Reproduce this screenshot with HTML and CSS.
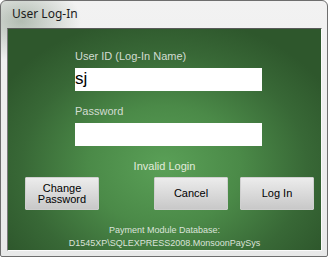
FILE: index.html
```html
<!DOCTYPE html>
<html lang="en">
<head>
    <meta charset="UTF-8">
    <title>User Log-In</title>
    <link rel="stylesheet" href="styles.css">
</head>
<body>
    <div class="window">
        <div class="title-bar">User Log-In</div>

        <div class="panel">
            <div class="form">
                <label class="field-label">User ID (Log-In Name)</label>
                <div class="text-box">sj</div>

                <label class="field-label second">Password</label>
                <div class="text-box"></div>
            </div>

            <p class="status">Invalid Login</p>

            <div class="button-row">
                <button class="btn">Change<br>Password</button>
                <button class="btn push">Cancel</button>
                <button class="btn">Log In</button>
            </div>

            <div class="db-info">
                <p>Payment Module Database:</p>
                <p>D1545XP\SQLEXPRESS2008.MonsoonPaySys</p>
            </div>
        </div>
    </div>
</body>
</html>
```

FILE: styles.css
```css
/* login window */

body {
    margin: 0;
    width: 328px;
    height: 257px;
    overflow: hidden;
    background-color: #fff;
}

.window {
    box-sizing: border-box;
    width: 328px;
    height: 257px;
    border: 1px solid #6e6e6e;
    border-radius: 6px 6px 2px 2px;
    background:
        radial-gradient(ellipse 60px 40px at 20px 20px, rgba(60, 90, 60, 0.35), rgba(60, 90, 60, 0) 100%),
        linear-gradient(#f2f2f2, #e8e9e9);
    display: flex;
    flex-direction: column;
}

.title-bar {
    height: 27px;
    padding-left: 11px;
    font-family: "Noto Sans", sans-serif;
    font-size: 12px;
    line-height: 26px;
    color: #1b1b1b;
}

.panel {
    box-sizing: border-box;
    width: 315px;
    height: 223px;
    margin-left: 6px;
    border-top: 1px solid #595959;
    border-left: 1px solid #7a7a7a;
    border-right: 1px solid #fafafa;
    border-bottom: 1px solid #fafafa;
    background: radial-gradient(ellipse 190px 150px at 50% 62%, #5aa057 0%, #4b8a48 40%, #386836 75%, #2e572c 100%);
    font-family: "Liberation Sans", Arial, sans-serif;
    display: flex;
    flex-direction: column;
}

.form {
    padding: 20px 0 0 67px;
    display: flex;
    flex-direction: column;
}

.field-label {
    font-size: 11px;
    line-height: 14px;
    color: #d3dcd2;
    margin-bottom: 5px;
}

.field-label.second {
    margin-top: 13px;
}

.text-box {
    width: 187px;
    height: 23px;
    background-color: #fff;
    font-size: 17px;
    line-height: 22px;
    color: #000;
}

.status {
    margin: 13px 0 0;
    text-align: center;
    font-size: 11px;
    line-height: 14px;
    color: #e1ecdc;
}

.button-row {
    display: flex;
    gap: 12px;
    padding: 0 7px 0 17px;
    margin-top: 4px;
}

.btn {
    width: 74px;
    height: 33px;
    padding: 0;
    border: 1px solid #cfcfcf;
    border-radius: 1px;
    background: linear-gradient(#ececec, #dadada 50%, #c8c8c8);
    font-family: "Liberation Sans", Arial, sans-serif;
    font-size: 11px;
    line-height: 11px;
    color: #000;
}

.btn.push {
    margin-left: auto;
}

.db-info {
    margin-top: 14px;
    text-align: center;
    font-size: 9px;
    line-height: 13px;
    color: #dbe3da;
}

.db-info p {
    margin: 0;
}
```
